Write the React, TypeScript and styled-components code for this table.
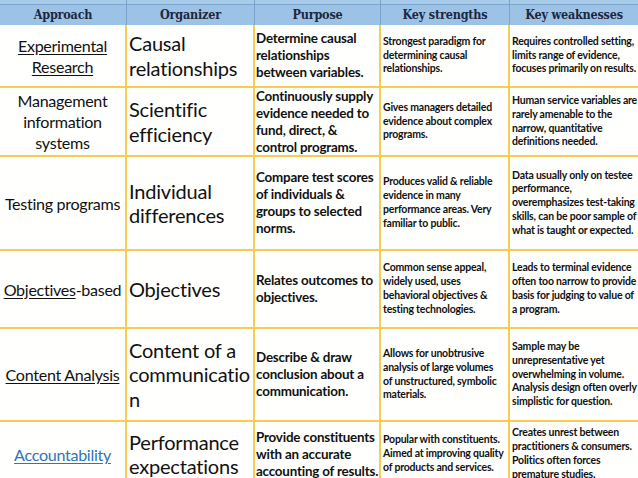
import React from "react";
import styled, { createGlobalStyle } from "styled-components";

const Global = createGlobalStyle`
  html, body { margin: 0; padding: 0; background: #ffffff; }
  body { width: 638px; height: 478px; overflow: hidden; }
`;

const Table = styled.div`
  display: grid;
  grid-template-columns: 127px 128px 126px 129px 128px;
  grid-template-rows: 25px 63px 69px 94px 78px 93px 66px;
  width: 638px;
  background: #fffffd;
`;

const HeadCell = styled.div<{ $last?: boolean }>`
  display: flex;
  align-items: flex-end;
  justify-content: center;
  padding-bottom: 3px;
  box-sizing: border-box;
  background: linear-gradient(to bottom, #a8cbe9 0 4px, #7da6cf 4px 5px, #9cc3e6 5px);
  border-right: ${(p) => (p.$last ? "none" : "1px solid #7aa3cb")};
  font-family: "DejaVu Serif", serif;
  font-stretch: condensed;
  font-weight: bold;
  font-size: 12.5px;
  color: #1c2740;
  letter-spacing: -0.2px;
`;

type Kind = "approach" | "organizer" | "purpose" | "small";

const Cell = styled.div<{ $kind: Kind; $last?: boolean }>`
  display: flex;
  align-items: center;
  box-sizing: border-box;
  border-right: ${(p) => (p.$last ? "none" : "2px solid #f5cd52")};
  border-bottom: 2px solid #f5cd52;
  font-family: Lato, "Open Sans", sans-serif;
  color: #111;
  overflow: hidden;
  ${(p) =>
    p.$kind === "approach"
      ? `justify-content: center; text-align: center; font-size: 16.1px; line-height: 21px; padding: 0 1px; letter-spacing: -0.3px;`
      : p.$kind === "organizer"
      ? `justify-content: flex-start; font-size: 20px; line-height: 24.5px; padding: 0 2px 0 2px; letter-spacing: -0.2px;`
      : p.$kind === "purpose"
      ? `justify-content: flex-start; font-size: 13.4px; line-height: 17px; font-weight: bold; padding: 0 1px; letter-spacing: -0.2px;`
      : `justify-content: flex-start; font-size: 10.5px; line-height: 13.8px; font-weight: bold; padding: 0 1px 0 2px; letter-spacing: -0.2px;`}
`;

const Under = styled.span`
  text-decoration: underline;
  text-underline-offset: 2px;
`;

const Link = styled.span`
  color: #2f74b5;
  text-decoration: underline;
  text-underline-offset: 2px;
`;

const Text = styled.div`
  white-space: nowrap;
`;

type Row = {
  approach: React.ReactNode;
  organizer: React.ReactNode;
  purpose: React.ReactNode;
  strengths: React.ReactNode;
  weaknesses: React.ReactNode;
};

const rows: Row[] = [
  {
    approach: (
      <Under>
        Experimental
        <br />
        Research
      </Under>
    ),
    organizer: (
      <>
        Causal
        <br />
        relationships
      </>
    ),
    purpose: (
      <>
        Determine causal
        <br />
        relationships
        <br />
        between variables.
      </>
    ),
    strengths: (
      <>
        Strongest paradigm for
        <br />
        determining causal
        <br />
        relationships.
      </>
    ),
    weaknesses: (
      <>
        Requires controlled setting,
        <br />
        limits range of evidence,
        <br />
        focuses primarily on results.
      </>
    ),
  },
  {
    approach: (
      <>
        Management
        <br />
        information
        <br />
        systems
      </>
    ),
    organizer: (
      <>
        Scientific
        <br />
        efficiency
      </>
    ),
    purpose: (
      <>
        Continuously supply
        <br />
        evidence needed to
        <br />
        fund, direct, &amp;
        <br />
        control programs.
      </>
    ),
    strengths: (
      <>
        Gives managers detailed
        <br />
        evidence about complex
        <br />
        programs.
      </>
    ),
    weaknesses: (
      <>
        Human service variables are
        <br />
        rarely amenable to the
        <br />
        narrow, quantitative
        <br />
        definitions needed.
      </>
    ),
  },
  {
    approach: <>Testing programs</>,
    organizer: (
      <>
        Individual
        <br />
        differences
      </>
    ),
    purpose: (
      <>
        Compare test scores
        <br />
        of individuals &amp;
        <br />
        groups to selected
        <br />
        norms.
      </>
    ),
    strengths: (
      <>
        Produces valid &amp; reliable
        <br />
        evidence in many
        <br />
        performance areas. Very
        <br />
        familiar to public.
      </>
    ),
    weaknesses: (
      <>
        Data usually only on testee
        <br />
        performance,
        <br />
        overemphasizes test-taking
        <br />
        skills, can be poor sample of
        <br />
        what is taught or expected.
      </>
    ),
  },
  {
    approach: (
      <>
        <Under>Objectives</Under>-based
      </>
    ),
    organizer: <>Objectives</>,
    purpose: (
      <>
        Relates outcomes to
        <br />
        objectives.
      </>
    ),
    strengths: (
      <>
        Common sense appeal,
        <br />
        widely used, uses
        <br />
        behavioral objectives &amp;
        <br />
        testing technologies.
      </>
    ),
    weaknesses: (
      <>
        Leads to terminal evidence
        <br />
        often too narrow to provide
        <br />
        basis for judging to value of
        <br />
        a program.
      </>
    ),
  },
  {
    approach: <Under>Content Analysis</Under>,
    organizer: (
      <>
        Content of a
        <br />
        communicatio
        <br />n
      </>
    ),
    purpose: (
      <>
        Describe &amp; draw
        <br />
        conclusion about a
        <br />
        communication.
      </>
    ),
    strengths: (
      <>
        Allows for unobtrusive
        <br />
        analysis of large volumes
        <br />
        of unstructured, symbolic
        <br />
        materials.
      </>
    ),
    weaknesses: (
      <>
        Sample may be
        <br />
        unrepresentative yet
        <br />
        overwhelming in volume.
        <br />
        Analysis design often overly
        <br />
        simplistic for question.
      </>
    ),
  },
  {
    approach: <Link>Accountability</Link>,
    organizer: (
      <>
        Performance
        <br />
        expectations
      </>
    ),
    purpose: (
      <>
        Provide constituents
        <br />
        with an accurate
        <br />
        accounting of results.
      </>
    ),
    strengths: (
      <>
        Popular with constituents.
        <br />
        Aimed at improving quality
        <br />
        of products and services.
      </>
    ),
    weaknesses: (
      <>
        Creates unrest between
        <br />
        practitioners &amp; consumers.
        <br />
        Politics often forces
        <br />
        premature studies.
      </>
    ),
  },
];

const headers = ["Approach", "Organizer", "Purpose", "Key strengths", "Key weaknesses"];

export default function App() {
  return (
    <>
      <Global />
      <Table>
        {headers.map((h, i) => (
          <HeadCell key={h} $last={i === headers.length - 1}>
            {h}
          </HeadCell>
        ))}
        {rows.map((r, i) => (
          <React.Fragment key={i}>
            <Cell $kind="approach">
              <Text>{r.approach}</Text>
            </Cell>
            <Cell $kind="organizer">
              <Text>{r.organizer}</Text>
            </Cell>
            <Cell $kind="purpose">
              <Text>{r.purpose}</Text>
            </Cell>
            <Cell $kind="small">
              <Text>{r.strengths}</Text>
            </Cell>
            <Cell $kind="small" $last>
              <Text>{r.weaknesses}</Text>
            </Cell>
          </React.Fragment>
        ))}
      </Table>
    </>
  );
}
